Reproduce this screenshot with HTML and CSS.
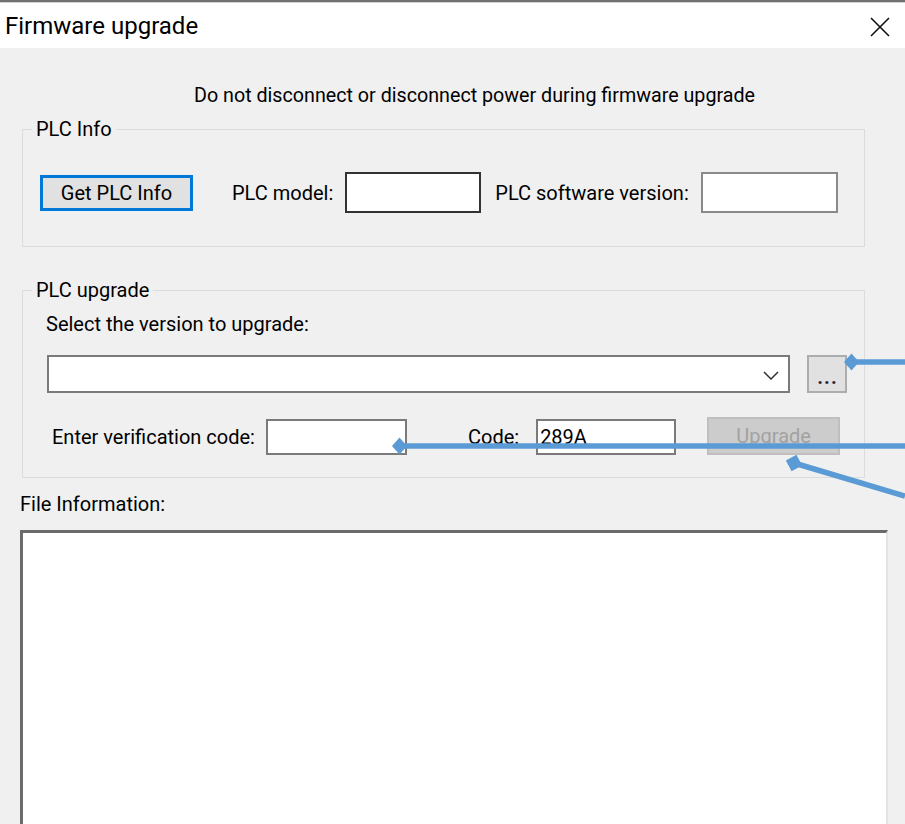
FILE: index.html
```html
<!DOCTYPE html>
<html lang="en">
<head>
<meta charset="utf-8">
<title>Firmware upgrade</title>
<link rel="stylesheet" href="styles.css">
</head>
<body>
<div class="window">
  <header class="titlebar">
    <span class="title">Firmware upgrade</span>
    <svg class="close" width="20" height="20" viewBox="0 0 20 20" aria-label="Close">
      <path d="M1 1 L19 19 M19 1 L1 19" stroke="#111" stroke-width="1.6" fill="none"/>
    </svg>
  </header>

  <main class="content">
    <p class="notice">Do not disconnect or disconnect power during firmware upgrade</p>

    <fieldset class="group group-info">
      <legend>PLC Info</legend>
      <div class="row info-row">
        <button class="btn btn-default">Get PLC Info</button>
        <span class="lbl lbl-model">PLC model:</span>
        <div class="field field-model field-focus"></div>
        <span class="lbl lbl-version">PLC software version:</span>
        <div class="field field-version"></div>
      </div>
    </fieldset>

    <fieldset class="group group-upgrade">
      <legend>PLC upgrade</legend>
      <div class="group-body">
        <div class="select-label">Select the version to upgrade:</div>
        <div class="file-row">
          <div class="combo">
            <svg class="chevron" width="16" height="9" viewBox="0 0 16 9">
              <path d="M1 1 L8 8 L15 1" stroke="#333" stroke-width="1.5" fill="none"/>
            </svg>
          </div>
          <button class="btn btn-browse">...</button>
        </div>
        <div class="row verify-row">
          <span class="lbl lbl-verify">Enter verification code:</span>
          <div class="field field-verify"></div>
          <span class="lbl lbl-code">Code:</span>
          <div class="field field-code">289A</div>
          <button class="btn btn-disabled" disabled>Upgrade</button>
        </div>
      </div>
    </fieldset>

    <div class="file-label">File Information:</div>
    <div class="file-info"></div>
  </main>

  <svg class="callouts" width="905" height="824" viewBox="0 0 905 824">
    <g stroke="#5b9bd5" stroke-width="5.5" fill="none">
      <line x1="905" y1="362" x2="852" y2="362"/>
      <line x1="905" y1="446" x2="400" y2="446"/>
      <line x1="905" y1="496" x2="794" y2="463"/>
    </g>
    <g fill="#5b9bd5">
      <polygon points="844,362 851.5,353.5 859,362 851.5,370.5"/>
      <polygon points="392,446 399.5,437.5 407,446 399.5,454.5"/>
      <polygon points="785.5,463 794,454.5 802.5,463 794,471.5" transform="rotate(16.5 794 463)"/>
    </g>
  </svg>
</div>
</body>
</html>
```

FILE: styles.css
```css
html, body {
  margin: 0;
  padding: 0;
  background: #f0f0f0;
}

body {
  font-family: Roboto, "Noto Sans", sans-serif;
  font-size: 20px;
  color: #000;
}

.window {
  position: relative;
  width: 905px;
  height: 824px;
  overflow: hidden;
  background: #f0f0f0;
  display: flex;
  flex-direction: column;
}

/* title bar */
.titlebar {
  box-sizing: border-box;
  height: 48px;
  flex: none;
  background: #fff;
  border-top: 2px solid #6f6f6f;
  box-shadow: inset 0 1px 0 #d2d2d2;
  display: flex;
  align-items: center;
  justify-content: space-between;
  padding: 0 15px 0 5px;
}

.title {
  font-size: 24px;
  line-height: 30px;
  margin-top: 2px;
}

.close {
  display: block;
  margin-top: 4px;
}

/* dialog body */
.content {
  flex: 1;
  display: flex;
  flex-direction: column;
  padding: 0 17px 0 20px;
  min-height: 0;
}

.notice {
  margin: 36px 0 0;
  padding-left: 41px;
  text-align: center;
  line-height: 24px;
  height: 24px;
  font-size: 19.7px;
}

.group {
  box-sizing: border-box;
  width: 843px;
  margin: 0 0 0 2px;
  padding: 0;
  border: 1px solid #dcdcdc;
  min-width: 0;
}

.group legend {
  padding: 0 4px;
  line-height: 24px;
}

.group-info {
  margin-top: 9px;
  padding: 31px 0 33px 17px;
}

.group-info legend {
  margin-left: -8px;
}

.group-upgrade {
  margin-top: 31px;
  padding: 0 0 22px 24px;
}

.group-upgrade legend {
  margin-left: -15px;
}

.row {
  display: flex;
  align-items: center;
}

.lbl {
  white-space: nowrap;
  line-height: 36px;
}

/* controls */
.btn {
  box-sizing: border-box;
  font: inherit;
  color: #000;
  background: #e1e1e1;
  border: 2px solid #adadad;
  padding: 0;
  margin: 0;
  display: flex;
  align-items: center;
  justify-content: center;
}

.btn-default {
  width: 153px;
  height: 36px;
  border: 3px solid #0078d7;
}

.btn-browse {
  width: 40px;
  height: 38px;
  margin-left: 17px;
  font-size: 20px;
  font-weight: 700;
  letter-spacing: 1px;
  padding: 6px 0 0 1px;
  color: #2b2540;
}

.btn-disabled {
  width: 133px;
  height: 38px;
  margin-left: 31px;
  background: #cccccc;
  border-color: #bfbfbf;
  color: #a2a2a2;
}

.field {
  box-sizing: border-box;
  background: #fff;
  border: 2px solid #7a7a7a;
  height: 36px;
  line-height: 32px;
  padding: 0 2px;
}

.field-focus {
  border-color: #333;
}

.lbl-model {
  margin-left: 39px;
}

.field-model {
  width: 136px;
  height: 41px;
  margin-left: 12px;
}

.lbl-version {
  margin-left: 14px;
}

.field-version {
  width: 137px;
  height: 41px;
  margin-left: 12px;
  border-color: #8a8a8a;
}

.select-label {
  margin-top: 10px;
  margin-left: -1px;
  line-height: 24px;
}

.file-row {
  display: flex;
  margin-top: 19px;
}

.combo {
  box-sizing: border-box;
  width: 743px;
  height: 38px;
  background: #fff;
  border: 2px solid #7a7a7a;
  display: flex;
  align-items: center;
  justify-content: flex-end;
  padding-right: 9px;
}

.chevron {
  display: block;
  margin-top: 2px;
}

.verify-row {
  margin-top: 24px;
  align-items: flex-end;
}

.lbl-verify {
  margin-left: 5px;
}

.field-verify {
  width: 141px;
  margin-left: 11px;
}

.lbl-code {
  margin-left: 61px;
}

.field-code {
  width: 140px;
  margin-left: 17px;
}

.file-label {
  margin-top: 14px;
  line-height: 24px;
}

.file-info {
  box-sizing: border-box;
  margin-top: 14px;
  width: 868px;
  flex: 1;
  background: #fff;
  border-top: 3px solid #6b6b6b;
  border-left: 3px solid #6b6b6b;
  border-right: 2px solid #e3e3e3;
  border-bottom: 0;
}

/* annotation arrows drawn over the dialog */
.callouts {
  position: absolute;
  left: 0;
  top: 0;
  pointer-events: none;
}
```
